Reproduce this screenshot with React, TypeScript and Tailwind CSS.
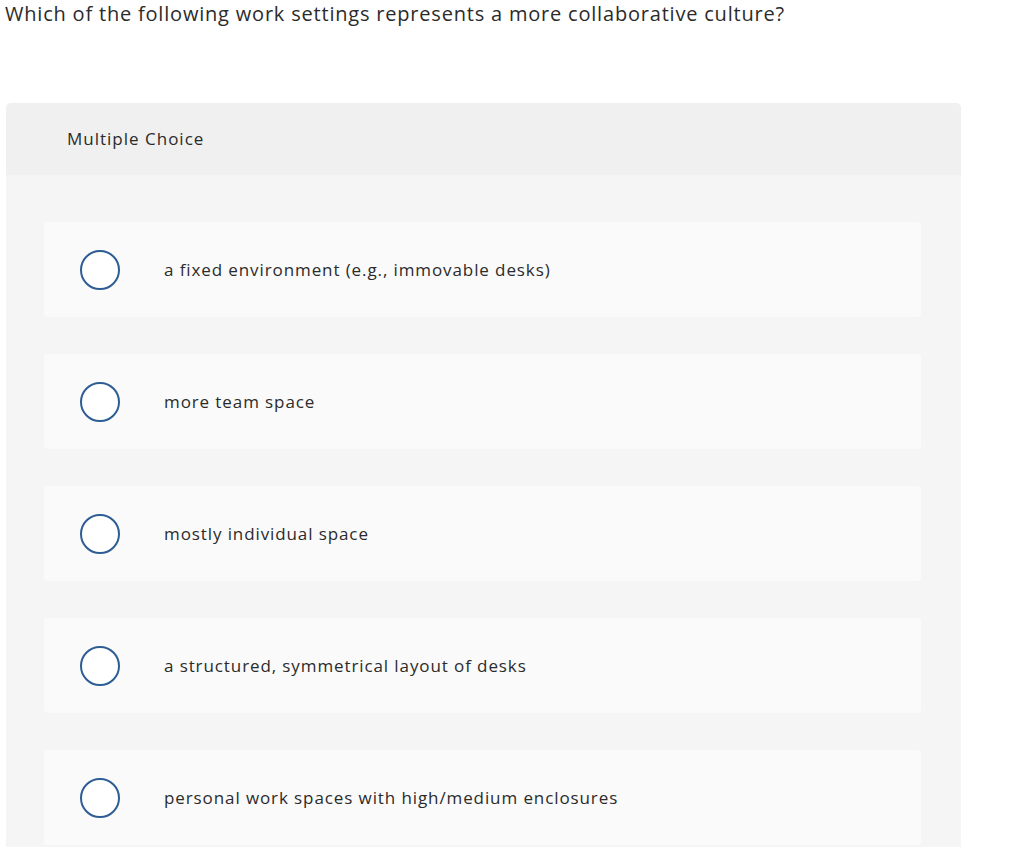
const options = [
  'a fixed environment (e.g., immovable desks)',
  'more team space',
  'mostly individual space',
  'a structured, symmetrical layout of desks',
  'personal work spaces with high/medium enclosures',
];

export default function App() {
  return (
    <div className="min-h-[854px] bg-white font-['Open_Sans','Lato',sans-serif] text-[#333]">
      <h1 className="pl-[5px] pt-0 text-[20px] leading-[27px] tracking-[0.8px] text-[#2b2b2b]">
        Which of the following work settings represents a more collaborative culture?
      </h1>

      <div className="ml-[6px] mt-[76px] w-[955px] overflow-hidden rounded-t-[5px] bg-[#f5f5f5]">
        <div className="flex h-[72px] items-center bg-[#f0f0f0] pl-[61px] text-[17px] tracking-[1px] text-[#2b2b2b]">
          Multiple Choice
        </div>

        <div className="flex flex-col gap-[37px] pb-[2px] pl-[38px] pr-[40px] pt-[47px]">
          {options.map((o) => (
            <div key={o} className="flex h-[95px] items-center rounded-[4px] bg-[#fafafa]">
              <span className="ml-[36px] h-[40px] w-[40px] shrink-0 rounded-full border-2 border-[#2c5d94] bg-white" />
              <span className="ml-[44px] text-[17px] tracking-[0.9px] text-[#2b2b2b]">{o}</span>
            </div>
          ))}
        </div>
      </div>
    </div>
  );
}
